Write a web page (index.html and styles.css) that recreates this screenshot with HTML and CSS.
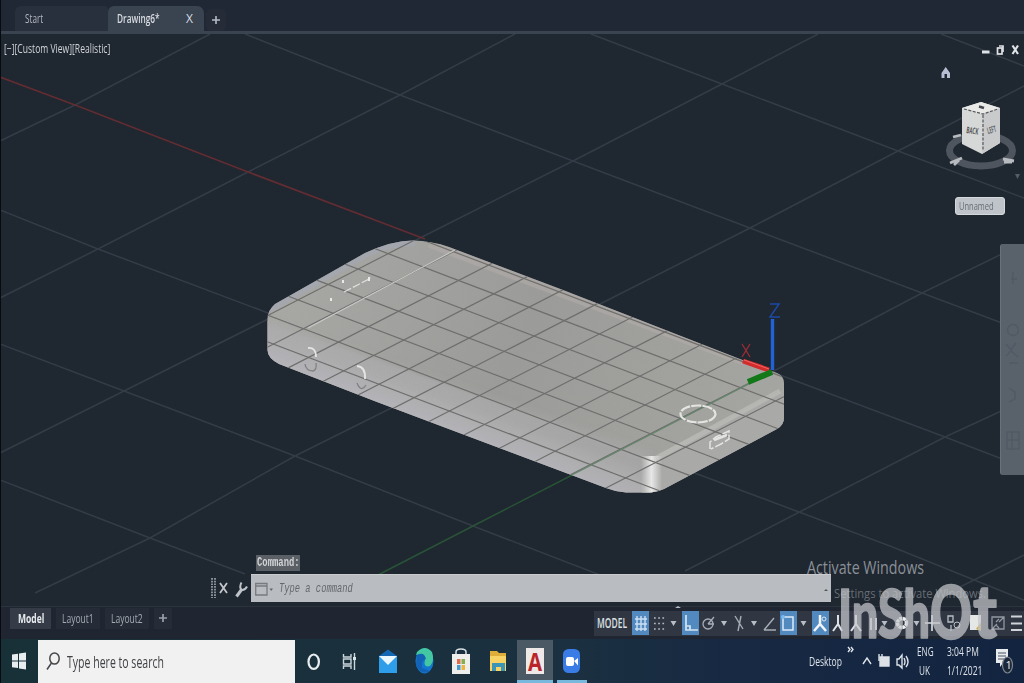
FILE: index.html
```html
<!DOCTYPE html>
<html lang="en">
<head>
<meta charset="utf-8">
<title>Drawing6</title>
<link rel="stylesheet" href="styles.css">
</head>
<body>
<div class="app">
  <header class="tabs">
    <div class="tab tab-start"><span class="t">Start</span></div>
    <div class="tab tab-active"><span class="t">Drawing6*</span><span class="t close">X</span></div>
    <div class="tab-add"><svg width="10" height="10"><path d="M5 1V9M1 5H9" stroke="#b4bbc5" stroke-width="1.6"/></svg></div>
  </header>

  <main class="viewport">
    <svg class="scene" width="1024" height="572" viewBox="0 34 1024 572">
      <defs>
        <clipPath id="bodyClip"><path d="M267.5 320Q267 311 275 304L365 253Q392 240.500 413 240.500Q432 241 449 247L563 290L745 361L777 373Q784 376 784 383V418Q784 425 777 429L664 489Q658 492 651 492.500H626Q616 492 606 488L478 440L377 402L279 364Q267.500 358 267.500 350Z"/></clipPath>
        <linearGradient id="top" gradientUnits="userSpaceOnUse" x1="300" y1="250" x2="740" y2="440"><stop offset="0" stop-color="#a7a7a4"/><stop offset=".5" stop-color="#9b9b99"/><stop offset="1" stop-color="#a4a4a0"/></linearGradient>
        <linearGradient id="side" gradientUnits="userSpaceOnUse" x1="450" y1="386" x2="435" y2="424"><stop offset="0" stop-color="#a3a3a2"/><stop offset=".45" stop-color="#acacad"/><stop offset="1" stop-color="#b3b3b8"/></linearGradient>
        <linearGradient id="shine"><stop offset="0" stop-color="#eee" stop-opacity="0"/><stop offset=".5" stop-color="#eee" stop-opacity=".9"/><stop offset="1" stop-color="#eee" stop-opacity="0"/></linearGradient>
        <filter id="soft"><feGaussianBlur stdDeviation="4"/></filter>
      </defs>
      <path class="grid" d="M245 34L400 95 573 161 750 228 922 293 1010 326M591 34L722 84 898 151 1024 198M941 34L1024 66M772 372L945 437 1010 462M0 210L98 249 268 313 623 449 700 475 890 546 1024 600M0 344L124 391 295 456 473 526 600 575M0 480L150 538 245 574M0 141L75 105 210 34M0 298L98 249 248 172 400 95 515 34M0 453L124 391 270 318 420 238 573 161 722 84 818 34M35 593L150 538 295 456 600 304 750 228 898 151 1024 86M772 372L922 293 1010 250M685 571L945 437 1010 407M960 587L1024 555"/>
      <path d="M0 77L75 105 248 172 425 239" stroke="#612c32" stroke-width="1.800" fill="none"/>
      <path d="M378 575L473 526 580 471" stroke="#295337" stroke-width="1.500" fill="none"/>
      <g clip-path="url(#bodyClip)">
        <path d="M260 235H790V500H260Z" fill="url(#top)"/>
        <path d="M260 318L650 458V500H260Z" fill="url(#side)"/>
        <path d="M650 458L790 386V500H640Z" fill="#a9a9a7"/>
        <path d="M267 326L650 458" stroke="#b8b8bc" stroke-width="10" opacity=".25" filter="url(#soft)"/>
        <path d="M430 242L745 360" stroke="#b5adac" stroke-width="12" opacity=".5"/>
        <path d="M268 309L365 254Q390 242 415 242" stroke="#a5a8b5" stroke-width="8" opacity=".65" fill="none"/>
        <path d="M657 458L780 391" stroke="#bdbdba" stroke-width="5" opacity=".65"/>
        <rect x="641" y="456" width="21" height="38" fill="url(#shine)"/>
        <path class="minor" d="M872 384l-634-241m604 256.400l-634-241m604 256.400l-634-241m604 256.400l-634-241m604 256.400l-634-241m604 256.400l-634-241m604 256.400l-634-241m604 256.400l-634-241m604 256.400l-634-241"/>
        <path class="minor" d="M867 354l-300 154m264.800-167.400l-300 154m264.800-167.400l-300 154m264.800-167.400l-300 154m264.800-167.400l-300 154m264.800-167.400l-300 154m264.800-167.400l-300 154m264.800-167.400l-300 154m264.800-167.400l-300 154m264.800-167.400l-300 154m264.800-167.400l-300 154m264.800-167.400l-300 154m264.800-167.400l-300 154m264.800-167.400l-300 154m264.800-167.400l-300 154m264.800-167.400l-300 154m264.800-167.400l-300 154"/>
        <path d="M772 372L570 476" stroke="#64856a" stroke-width="1.300"/>
        <path d="M308 328L455 250" stroke="#c9c9c6" stroke-width="1.100"/>
        <path d="M344 292L371 278" stroke="#dededc" stroke-width="1.300" stroke-dasharray="8 2"/>
        <path d="M369 277v4M331 298v3M343 280v3" stroke="#e9e9e9" stroke-width="2"/>
      </g>
      <g fill="none" stroke="#e4e4e2" stroke-width="1.800">
        <path d="M308 348Q316 347 316 357M357 366Q366 367 365 379"/>
        <path d="M305 364Q306 371 313 371 317 370 316 363M357 383Q361 393 366 385" stroke="#818180" stroke-width="1.300"/>
        <ellipse cx="698" cy="414" rx="17.500" ry="8.500" stroke-width="2.200" stroke-dasharray="10 1.200"/>
        <path d="M710 449V442L716 437 729 431V439L721 444 711 449" stroke-width="1.500" stroke-dasharray="9 2"/><path d="M714 440L727 435" stroke-width="2.600"/>
      </g>
      <path d="M772.500 370V319" stroke="#2163d7" stroke-width="3.400"/>
      <path d="M743 361L769 370" stroke="#d42b2d" stroke-width="5"/><path d="M744 360L769 369" stroke="#ec6960" stroke-width="1"/>
      <path d="M748 382L772 372" stroke="#127818" stroke-width="6"/>
      <path d="M742 344L750 357M750 344L742 357" stroke="#9d2d33" stroke-width="1.300"/>
      <path d="M770 304H779L770 317H780" stroke="#1c49a5" stroke-width="1.500" fill="none"/>
    </svg>

    <div class="view-label"><span class="t">[−][Custom View][Realistic]</span></div>
    <svg class="winctl" width="40" height="14" viewBox="982 42 40 14" fill="none" stroke="#dfe2e6"><path d="M982 52H989.500" stroke-width="3"/><rect x="997.500" y="48" width="4.500" height="6" stroke-width="1.700"/><path d="M999 46H1003V52" stroke-width="1.700"/><path d="M1012.500 45.500L1018 54M1018 45.500L1012.500 54" stroke-width="2.200"/></svg>
    <svg class="cube" width="88" height="120" viewBox="936 62 88 120">
      <path d="M941.500 73L945.700 67 950 73V78H947V74H944.500V78H941.500Z" fill="#b9bed3"/>
      <ellipse cx="981" cy="150.500" rx="31.500" ry="15.500" fill="none" stroke="#4f555e" stroke-width="7"/>
      <path d="M962 108L981 102 1000 108V143L982 154 962 144Z" fill="#d6d7d7"/>
      <path d="M962 108L981 102 1000 108 983 114Z" fill="#e9e9e8"/>
      <path d="M983 114L1000 108V143L982 154Z" fill="#c9cacb"/>
      <path d="M964 109L983 114 998 109M983 115V151" fill="none" stroke="#55585c" stroke-width="1.200" stroke-dasharray="3 1.500"/><path d="M979 106.500L984 108" stroke="#44474c" stroke-width="2.500"/>
      <text x="966" y="133" font-size="9" font-weight="bold" textLength="12" lengthAdjust="spacingAndGlyphs" fill="#55575a" transform="rotate(8 966 133)">BACK</text>
      <text x="988" y="134" font-size="9" font-weight="bold" textLength="9" lengthAdjust="spacingAndGlyphs" fill="#66686b" transform="rotate(-15 988 134)">LEFT</text>
      <path d="M950 163L962 158M954 165L959 160M1003 159L1014 161M1004 162H1012M953 137L961 135" stroke="#b8bbbf" stroke-width="2.800"/>
      <path d="M1015 174L1017.500 179L1020 174Z" fill="#555c66"/>
    </svg>
    <div class="ucs"><span class="t">Unnamed</span></div>
    <div class="navbar"><svg width="24" height="231" viewBox="0 0 24 231" fill="none" stroke="#515964" stroke-width="1.300"><path d="M10 35H16M12 28V40"/><circle cx="12" cy="86" r="5.500"/><path d="M5 100L10 106 15 99M5 112L10 107 17 113M8 119H17M8 144L14 148V155L8 158"/><path d="M6 188H18V205H6ZM6 196H18M11 188V205"/></svg></div>

    <div class="history"><span class="t">Command:</span></div>
    <div class="cmd">
      <svg class="cmd-tools" width="42" height="28" viewBox="209 574 42 28"><path d="M212 578V598M215 578V598" stroke="#9ca2aa" stroke-width="1.700" stroke-dasharray="1.700 1"/><path d="M220 583L227 593M227 583L220 593" stroke="#c3c7cc" stroke-width="1.800"/><path d="M236.500 596.500L242 589" stroke="#bfc4ca" stroke-width="3" fill="none"/><path d="M241.500 582.500Q239 587 241.500 590 245 590.500 247 586.500" stroke="#bfc4ca" stroke-width="2" fill="none"/></svg>
      <div class="cmd-input">
        <svg width="18" height="14"><path d="M.7 1.500H12V13H.7ZM.7 4H12" fill="none" stroke="#777b7f" stroke-width="1.300"/><path d="M14.500 6.500H18L16.200 9Z" fill="#666"/></svg>
        <span class="t">Type a command</span><i class="up"></i>
      </div>
    </div>
  </main>

  <section class="status">
    <div class="layouts">
      <div class="lay on"><span class="t">Model</span></div><div class="lay"><span class="t">Layout1</span></div><div class="lay"><span class="t">Layout2</span></div><div class="lay plus"><svg width="8" height="10"><path d="M4 1V9M0 5H8" stroke="#99a0aa" stroke-width="1.700"/></svg></div>
    </div>
    <svg class="tools" width="430" height="33" viewBox="594 606 430 33" fill="none">
      <path d="M594 611H1024V636H594Z" fill="#303743"/>
      <text x="597" y="628" textLength="30" lengthAdjust="spacingAndGlyphs" fill="#dce0e4" font-size="13.500" font-weight="600">MODEL</text>
      <path d="M632 611H649V635H632ZM682 611H699V635H682ZM780 611H797V635H780ZM812 611H829V635H812Z" fill="#5289bf"/>
      <path d="M637 616V631M641 616V631M645 616V631M635 619H647M635 624H647M635 629H647" stroke="#cce0f3" stroke-width="1.400"/>
      <path d="M654 618H665M654 623.500H665M654 629H665" stroke="#b6bcc4" stroke-width="1.700" stroke-dasharray="1.700 2.500"/>
      <path d="M670.500 621H676.500L673.500 626ZM721 621H727L724 626ZM751 621H757L754 626ZM800.500 621H806.500L803.500 626ZM881.500 621H887.500L884.500 626ZM913.500 621H919.500L916.500 626ZM675 608L678 606 681 608Z" fill="#b8bdc5"/>
      <path d="M686 615V630H698M686 626H690V630" stroke="#d3e4f4" stroke-width="1.700"/>
      <circle cx="708" cy="624" r="5" stroke="#a6adb6" stroke-width="1.300"/><path d="M708 624L714 617M708 624H714" stroke="#a6adb6" stroke-width="1.300"/>
      <path d="M735 616L743 629M741 616L738 631M764 630H776M764 630L774 618" stroke="#a6adb6" stroke-width="1.400"/>
      <rect x="783" y="617" width="10" height="13" stroke="#dceaf7" stroke-width="1.500"/><circle cx="783" cy="617" r="2" fill="#7bbcf0"/>
      <path d="M820 615V624L814 631M820 624L826 631" stroke="#f1f5fa" stroke-width="2.500"/><circle cx="824" cy="619" r="2" stroke="#d5e5f4"/>
      <path d="M838 615V624L833 631M838 624L842 631M856 615V624L851 631M856 624L861 631" stroke="#dde1e5" stroke-width="2"/>
      <path d="M871 618V630M876 618V630M932 615V631M925 623H940" stroke="#d6dae0" stroke-width="1.700"/>
      <circle cx="902" cy="623" r="4.500" stroke="#f0f1f3" stroke-width="3.500" stroke-dasharray="3 .6"/>
      <path d="M948 616H953V622H948ZM951 625V631" stroke="#b9bfc6" stroke-width="1.300"/><circle cx="957" cy="625" r="3" stroke="#b9bfc6"/>
      <path d="M970 615H981V630H970Z" fill="#e5e6e6"/><path d="M976 629L981 622V631Z" fill="#c9aa50"/>
      <path d="M992 617H1004V629H992ZM999 619L996 622M996 625L999 628M1004 617L999 622M992 629L997 624" stroke="#9299a3" stroke-width="1.300"/>
      <path d="M1011 616.500H1022M1011 623.500H1022M1011 630H1022" stroke="#d0d4d9" stroke-width="2.200"/>
    </svg>
  </section>

  <footer class="taskbar">
    <div class="winbtn"><svg width="14" height="18"><path d="M0 2.500L6 1.700V8.500H0ZM7 1.500L14 .5V8.500H7ZM0 9.500H6V16L0 15.300ZM7 9.500H14V17.500L7 16.500Z" fill="#e8edf0"/></svg></div>
    <div class="search"><svg width="15" height="20" fill="none" stroke="#44474a" stroke-width="1.500"><ellipse cx="8.500" cy="6.500" rx="4.700" ry="5.500"/><path d="M5.500 11L1 17.500"/></svg><span class="t">Type here to search</span></div>
    <svg class="apps" width="300" height="44" viewBox="295 639 300 44">
      <ellipse cx="313.700" cy="661.700" rx="5.200" ry="7.200" fill="none" stroke="#e8edf0" stroke-width="2.200"/>
      <path d="M343.500 654V657H351V654M343.500 669V666H351V669M343.500 659V664H351V659ZM354.500 653V670" fill="none" stroke="#cbd5da" stroke-width="1.400"/><path d="M353 657H356V660H353Z" fill="#dce4e7"/>
      <path d="M379 656L388 649.500 397 656V672H379Z" fill="#1268b3"/><path d="M379 656H397V673H379Z" fill="#2e9eea"/><path d="M379 656H397L388 665Z" fill="#ebf7fe"/>
      <ellipse cx="424.500" cy="661" rx="9" ry="12.500" fill="#1477cf"/><path d="M417 652Q425 644 432 652 435 661 430 666 423 668 425 660 422 653 416 655Z" fill="#43c7a2"/><path d="M417 655Q424 651 426 659 421 660 422 668L430 671Q421 676 416 665Z" fill="#1262b6"/>
      <path d="M456 655V652Q456 649 461 649T466 652V655" fill="none" stroke="#d8dfe3" stroke-width="1.500"/><path d="M452 654H470V674H452Z" fill="#eeefed"/><path d="M457 659H460.500V664H457Z" fill="#e26a50"/><path d="M461.500 659H465V664H461.500Z" fill="#83af50"/><path d="M457 665H460.500V670H457Z" fill="#469bd1"/><path d="M461.500 665H465V670H461.500Z" fill="#edb441"/>
      <path d="M490 651H497L499 653H506V671H490Z" fill="#dfae3a"/><path d="M490 656H506V671H490Z" fill="#f7d366"/><path d="M492 663H505V671H501V667H496V671H492Z" fill="#3d95b6"/>
      <path d="M517 640H553V683H517Z" fill="#4a5963"/><path d="M517 680H553V683H517ZM557 680H587V683H557Z" fill="#79b8dd"/>
      <path d="M526 648H544V674H526Z" fill="#eee9e7"/><text x="528" y="671" font-size="25" font-weight="bold" fill="#b92529" textLength="14" lengthAdjust="spacingAndGlyphs">A</text>
      <rect x="563" y="649" width="17" height="24" rx="5.500" fill="#397ce5"/><rect x="566" y="657" width="8" height="9" rx="2" fill="#fff"/><path d="M574 661L578 658V665.500Z" fill="#fff"/>
    </svg>
    <div class="tray">
      <span class="t desk">Desktop</span>
      <svg width="66" height="44" viewBox="845 639 66 44" fill="none" stroke="#dce2e8" stroke-width="1.400"><path d="M848 647L850 649.500 848 652M851 647L853 649.500 851 652"/><path d="M863 664L867 658 871 664"/><path d="M880 657H889V666H880Z" fill="#dce2e8"/><path d="M879 654V661M882 654V657"/><path d="M897 659H899L902 655V668L899 665H897ZM904 658Q906 662 904 665M906 656Q910 662 906 667"/></svg>
      <div class="stack lang"><span class="t">ENG</span><span class="t">UK</span></div>
      <div class="stack time"><span class="t">3:04 PM</span><span class="t">1/1/2021</span></div>
      <svg class="note" width="24" height="32" viewBox="992 649 24 32"><path d="M996 653H1008V667H1003L1000 671V667H996Z" fill="#e9ecef"/><path d="M998 657H1006M998 660H1006M998 663H1004" stroke="#46505c"/><ellipse cx="1007.500" cy="669" rx="5" ry="8" fill="#1b2838" stroke="#7c8590" stroke-width="1.200"/><text x="1005.500" y="673" font-size="11" fill="#eef">1</text></svg>
    </div>
  </footer>

  <svg class="marks" width="224" height="100" viewBox="800 545 224 100">
    <text x="807" y="574" font-size="18" textLength="117" lengthAdjust="spacingAndGlyphs" fill="#8a9097">Activate Windows</text>
    <text x="834" y="598" font-size="13" textLength="152" lengthAdjust="spacingAndGlyphs" fill="#666d75">Settings to activate Windows.</text>
    <g class="brand">
      <text x="838" y="638" font-size="66" textLength="92" lengthAdjust="spacingAndGlyphs">InSh</text>
      <text x="930" y="639" font-size="75" textLength="42" lengthAdjust="spacingAndGlyphs">O</text>
      <text x="973" y="638" font-size="74" textLength="24" lengthAdjust="spacingAndGlyphs">t</text>
    </g>
  </svg>
</div>
</body>
</html>
```

FILE: styles.css
```css
* { box-sizing: border-box; }
body { margin: 0; overflow: hidden; background: #1f2730; font-family: "Open Sans", "Noto Sans", sans-serif; }
svg { display: block; flex: none; }
.app { position: relative; width: 1024px; height: 683px; display: grid; grid-template-rows: 34px 572px 33px 44px; }
.app::before { content: ""; position: absolute; z-index: 2; left: 0; top: 0; width: 1px; height: 683px; background: #070a0e; }
.t { display: inline-block; white-space: nowrap; transform-origin: left center; transform: scaleX(.75); }

.tabs { display: flex; align-items: flex-end; padding-left: 15px; background: #202735; border-bottom: 3px solid #3a4350; }
.tab { height: 25px; display: flex; align-items: center; font-size: 12px; color: #b1b6bf; }
.tab-start { width: 93px; padding-left: 10px; background: #29303d; border-radius: 6px 4px 0 0; font-weight: 500; }
.tab-start .t { transform: scaleX(.68); }
.tab-active { width: 96px; padding-left: 9px; background: #3a4350; color: #d8dce1; border-radius: 6px 7px 0 0; font-weight: 600; }
.tab-active .t { width: 69px; transform: scaleX(.69); }
.tab-active .close { width: 10px; font-weight: 400; transform: scaleX(1); }
.tab-add { width: 20px; height: 22px; margin-left: 2px; display: grid; place-items: center; background: #252c38; border-radius: 5px; }

.viewport { position: relative; overflow: hidden; }
.grid { fill: none; stroke: #333c46; stroke-width: 1.6; }
.minor { fill: none; stroke: #6e6f6d; stroke-width: 1.2; }
.view-label { position: absolute; left: 4px; top: 6px; font-size: 12px; line-height: 17px; color: #d0d4d8; font-weight: 500; }
.view-label .t { transform: scaleX(.715); }
.winctl { position: absolute; left: 982px; top: 8px; }
.cube { position: absolute; left: 936px; top: 28px; }
.ucs { position: absolute; left: 955px; top: 163px; width: 50px; height: 18px; padding-left: 3px; background: #bfc4ca; border: 1px solid #d6d9dc; border-radius: 3px; font-size: 10px; line-height: 16px; color: #666b73; }
.navbar { position: absolute; left: 1000px; top: 210px; width: 24px; height: 231px; background: #59616b; border-left: 1px solid #6a717a; border-radius: 3px 0 0 3px; }
.history { position: absolute; left: 256px; top: 521px; width: 44px; height: 16px; padding-left: 1px; background: #5b6066; color: #d1d3d5; font: bold 12px/17px "Liberation Mono", monospace; }
.history .t { transform: scaleX(.74); }
.cmd { position: absolute; left: 209px; top: 540px; display: flex; height: 28px; }
.cmd-input { width: 580px; display: flex; align-items: center; gap: 6px; padding-left: 4px; background: #b9bcc0; border-top: 1px solid #c9cbcd; color: #65696f; font: italic 13px "Liberation Mono", monospace; }
.cmd-input .t { transform: scaleX(.675); }
.up { margin-left: auto; margin-right: 3px; border: 2px solid transparent; border-bottom-color: #555; }

.status { display: flex; background: #1f2632; border-top: 1px solid #2b333d; }
.layouts { width: 594px; display: flex; padding: 1px 0 0 10px; gap: 5px; }
.lay { width: 44px; height: 21px; padding-left: 6px; line-height: 21px; font-size: 12px; color: #a3a9b2; background: #252c37; font-weight: 500; }
.lay .t { transform: scaleX(.71); }
.lay.on { width: 41px; padding-left: 8px; background: #353c48; color: #e8ebee; font-weight: 700; }
.lay.plus { width: 18px; padding-top: 5px; padding-left: 5px; }
.tools { margin-top: -1px; }

.taskbar { display: flex; background: linear-gradient(90deg, #183037, #1b3040 55%, #172943 72%, #12243f); }
.winbtn { width: 38px; padding: 13px 0 0 12px; }
.search { width: 257px; margin-top: 1px; display: flex; align-items: center; padding-left: 8px; gap: 6px; background: #f1f1f1; color: #3f4144; font-size: 15.5px; }
.search .t { transform: scaleX(.68); }
.tray { width: 429px; display: flex; align-items: center; padding-left: 214px; color: #dde2e8; font-size: 12px; font-weight: 500; }
.desk { width: 36px; transform: scaleX(.71); }
.stack { display: flex; flex-direction: column; line-height: 19px; align-self: flex-start; padding-top: 3px; }
.lang { width: 30px; padding-left: 6px; }
.lang .t { transform: scaleX(.68); }
.lang .t + .t { margin-left: 2px; }
.time { width: 51px; padding-left: 6px; }
.time .t { transform: scaleX(.71); }
.marks { position: absolute; z-index: 3; left: 800px; top: 545px; }
.brand { font-family: Lato, sans-serif; font-weight: 900; opacity: .72; fill: #c6c8cc; stroke: #c6c8cc; stroke-width: 1.6; stroke-linejoin: round; }
```
